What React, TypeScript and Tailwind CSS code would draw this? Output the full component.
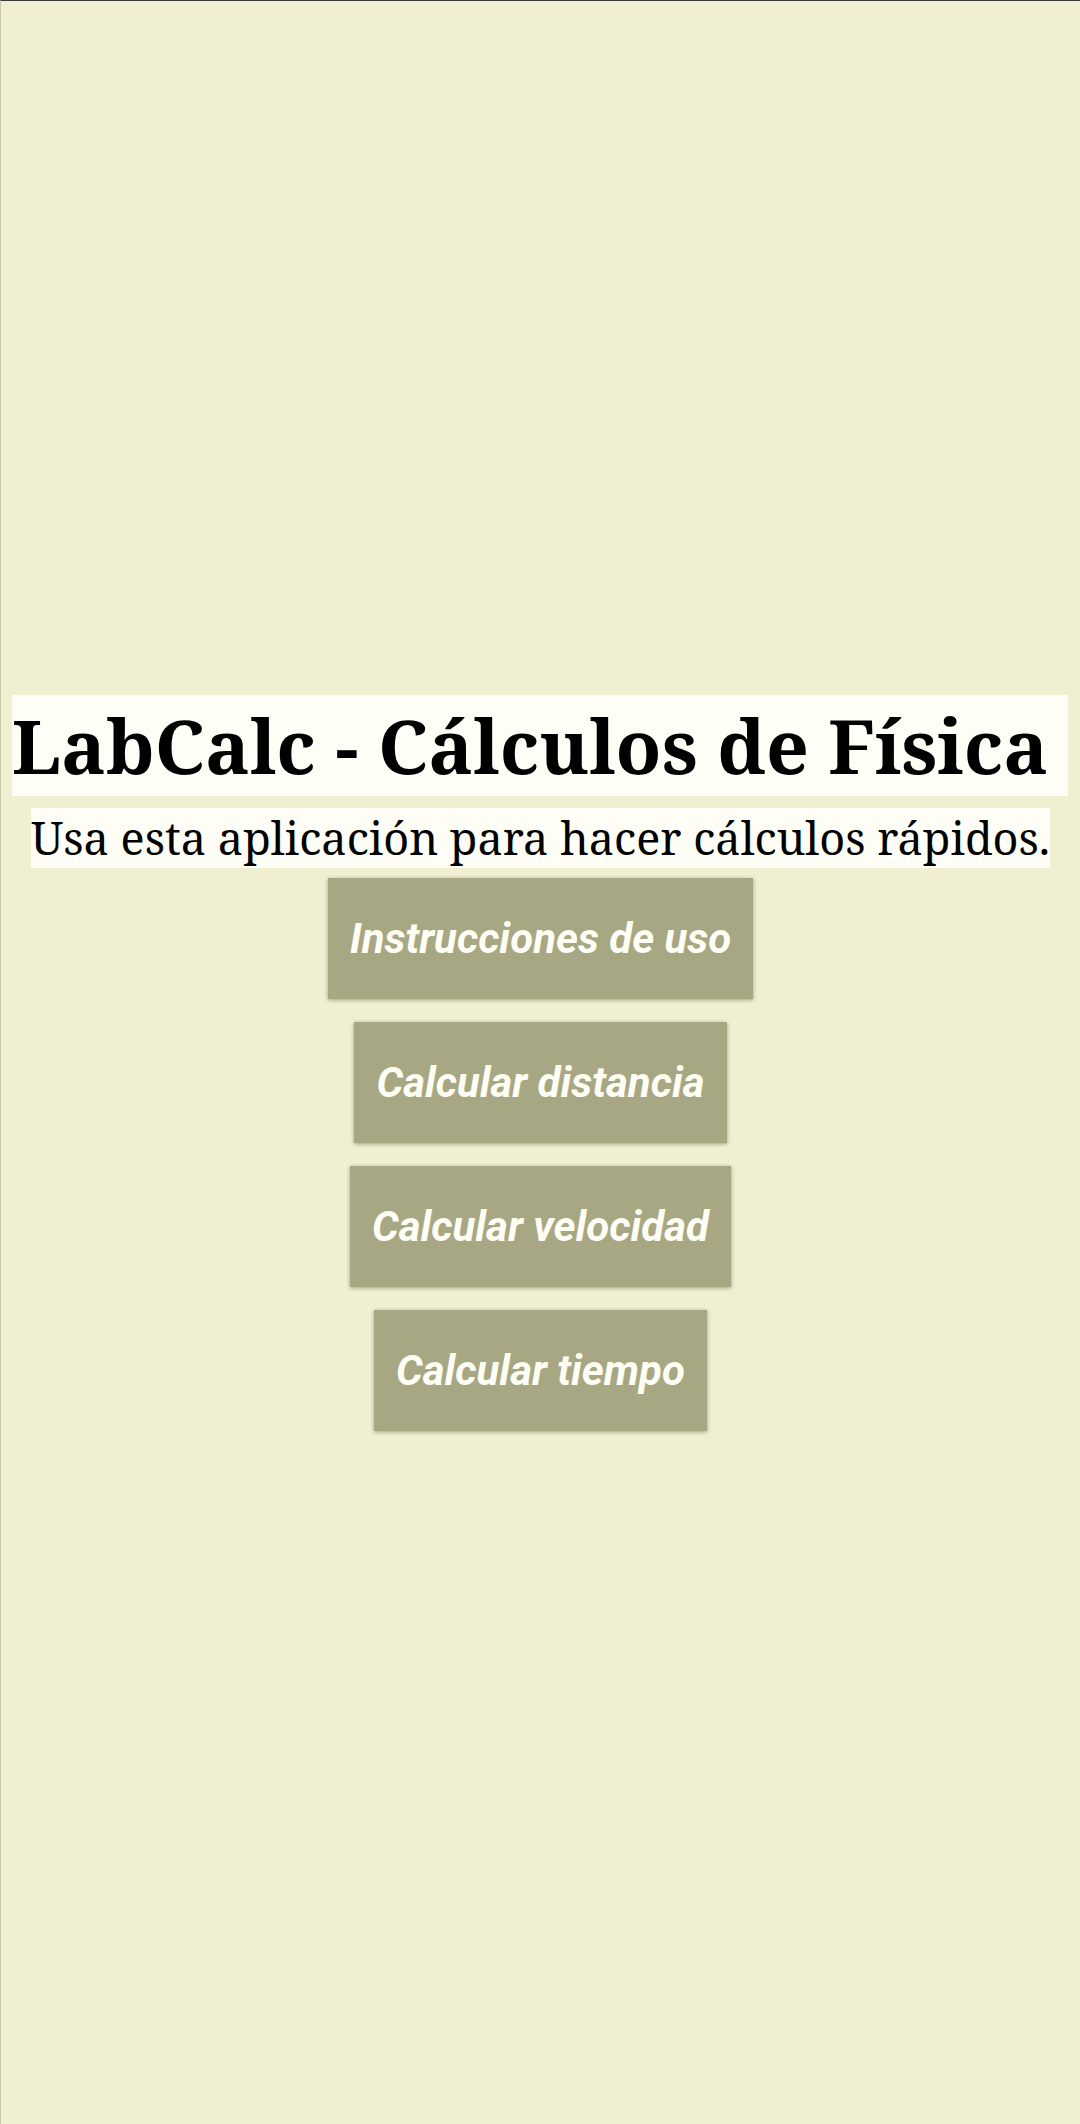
import React from 'react'

const buttons = ['Instrucciones de uso', 'Calcular distancia', 'Calcular velocidad', 'Calcular tiempo']

function App() {
    return (
        <div className="h-[2124px] bg-[#f0efd2] border-t border-t-[#3a3a3a] border-l border-l-[#c9c8ae] flex flex-col justify-center">
            {/* Title */}
            <h1 className="self-start ml-[11px] bg-[#fefef6] text-black font-bold text-[75px] leading-[101px] whitespace-nowrap font-['Noto_Serif','DejaVu_Serif',serif]">
                LabCalc - Cálculos de Física&nbsp;
            </h1>
            <p className="self-start ml-[30px] mt-[12px] bg-[#fefef6] text-black text-[45px] leading-[60px] whitespace-nowrap font-['Noto_Serif','DejaVu_Serif',serif]">
                Usa esta aplicación para hacer cálculos rápidos.
            </p>

            {/* Menu */}
            <div className="flex flex-col items-center mt-[10px] gap-[23px]">
                {buttons.map((label) => (
                    <button
                        key={label}
                        className="h-[121px] px-[22px] bg-[#a8a784] text-[#fefef4] italic font-bold text-[42px] font-['Roboto',sans-serif] shadow-[0_1px_4px_rgba(0,0,0,0.35)]"
                    >
                        {label}
                    </button>
                ))}
            </div>
        </div>
    )
}

export default App
